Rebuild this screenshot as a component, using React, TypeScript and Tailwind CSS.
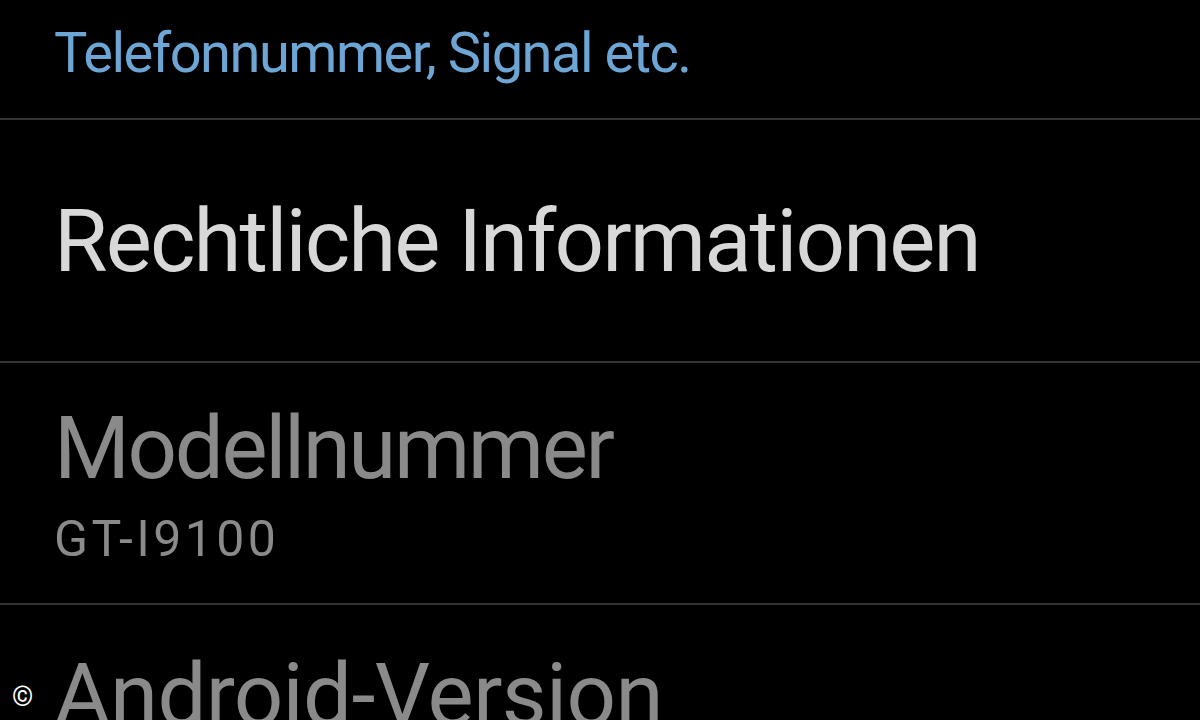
export default function App() {
  const font = { fontFamily: "Roboto, 'Noto Sans', sans-serif" };
  return (
    <div className="relative w-[1200px] h-[720px] overflow-hidden bg-black" style={font}>
      <div className="flex flex-col">
        <div className="h-[118px] pl-[54px] pt-[21px]">
          <div className="text-[56px] leading-[64px] tracking-[-1.5px] text-[#6da6d4] whitespace-nowrap">Telefonnummer, Signal etc.</div>
        </div>
        <div className="h-[2px] bg-[#333333]" />
        <div className="h-[241px] pl-[54px] flex items-center">
          <div className="text-[87px] leading-[100px] tracking-[-1.9px] text-[#d8d8d8] whitespace-nowrap">Rechtliche Informationen</div>
        </div>
        <div className="h-[2px] bg-[#333333]" />
        <div className="h-[240px] pl-[54px] pt-[35px]">
          <div className="text-[87px] leading-[100px] tracking-[-2.4px] text-[#8a8a8a] whitespace-nowrap">Modellnummer</div>
          <div className="mt-[13px] text-[50px] leading-[56px] tracking-[3.4px] text-[#8a8a8a] whitespace-nowrap">GT-I9100</div>
        </div>
        <div className="h-[2px] bg-[#333333]" />
        <div className="pl-[54px] pt-[40px]">
          <div className="text-[87px] leading-[100px] tracking-[-0.7px] text-[#8a8a8a] whitespace-nowrap">Android-Version</div>
        </div>
      </div>
      <div className="absolute left-[12px] top-[682px] text-[27px] leading-[30px] text-white">©</div>
    </div>
  );
}
